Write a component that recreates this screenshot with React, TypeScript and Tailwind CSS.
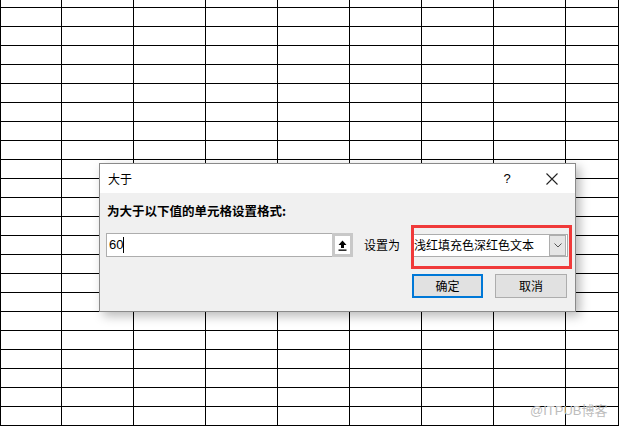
const COLS = [61, 72, 72, 72, 72, 72, 72, 72, 53];
const ROWS = [8, ...Array.from({ length: 22 }, () => 19)];

function Sheet() {
  return (
    <div className="flex flex-col w-[619px] h-[426px] overflow-hidden bg-white border-l border-black">
      {ROWS.map((h, r) => (
        <div key={r} className="flex shrink-0" style={{ height: h }}>
          {COLS.map((w, c) => (
            <div key={c} className="shrink-0 border-r border-b border-black" style={{ width: w }} />
          ))}
        </div>
      ))}
    </div>
  );
}

function Dialog() {
  return (
    <div className="absolute left-[99px] top-[163px] w-[477px] h-[149px] flex flex-col border border-[#8a8a8a] bg-[#f0f0f0] shadow-[4px_4px_10px_rgba(0,0,0,0.28)] font-['Noto_Sans_CJK_SC',sans-serif] text-[12px] text-black">
      {/* title bar */}
      <div className="h-[29px] shrink-0 bg-white flex items-center pl-[8px]">
        <span className="flex-1 leading-none">大于</span>
        <span className="w-[18px] text-center font-['Liberation_Sans',sans-serif] text-[13px] leading-none">?</span>
        <span className="w-[46px] flex justify-center ml-[13px]">
          <svg width="12" height="12" viewBox="0 0 12 12">
            <path d="M0.5 0.5 L11.5 11.5 M11.5 0.5 L0.5 11.5" stroke="#222" strokeWidth="1.1" fill="none" />
          </svg>
        </span>
      </div>
      {/* body */}
      <div className="flex-1 flex flex-col pl-[6px] pr-[7px]">
        <p className="mt-[11px] pl-[1px] font-bold text-[12.5px] leading-[14px]">为大于以下值的单元格设置格式:</p>
        <div className="mt-[15px] flex items-center">
          <div className="flex h-[24px] w-[247px] border border-[#adadad] bg-white">
            <div className="flex-1 flex items-center pl-[2px] font-['Liberation_Sans',sans-serif] text-[13px]">
              60<span className="w-px h-[16px] bg-black" />
            </div>
            <div className="w-[21px] -my-px -mr-px border-[3px] border-[#c8c8c8] bg-white flex items-center justify-center h-[24px]">
              <svg width="9" height="11" viewBox="0 0 9 11">
                <path d="M4.5 0.5 L8.5 5 H6 V8 H3 V5 H0.5 Z" fill="#000" />
                <rect x="0.5" y="9.5" width="8" height="1.3" fill="#000" />
              </svg>
            </div>
          </div>
          <span className="ml-[11px] w-[47px] leading-none">设置为</span>
          <div className="flex h-[23px] w-[157px] border border-[#adadad] bg-white items-center">
            <span className="flex-1 pl-[2px] leading-none">浅红填充色深红色文本</span>
            <div className="w-[17px] h-[21px] mr-px bg-[#e5e5e5] border border-[#adadad] flex items-center justify-center">
              <svg width="8" height="5" viewBox="0 0 8 5">
                <path d="M0.5 0.5 L4 4 L7.5 0.5" stroke="#555" strokeWidth="1" fill="none" />
              </svg>
            </div>
          </div>
        </div>
        <div className="mt-[17px] flex justify-end gap-[12px] pr-[1px]">
          <button className="w-[71px] h-[24px] bg-[#e1e1e1] border-2 border-[#0078d7] leading-none">确定</button>
          <button className="w-[72px] h-[24px] bg-[#e1e1e1] border border-[#adadad] leading-none">取消</button>
        </div>
      </div>
    </div>
  );
}

export default function App() {
  return (
    <div className="relative w-[619px] h-[426px] overflow-hidden bg-white">
      <Sheet />
      <Dialog />
      {/* red highlight box */}
      <div className="absolute left-[411px] top-[225px] w-[161px] h-[44px] border-[3px] border-[#f03a3a]" />
      <span className="absolute left-[530px] top-[403px] font-['Liberation_Sans','Noto_Sans_CJK_SC',sans-serif] text-[13px] leading-[16px] text-[#bdbdbd]">
        @ITPUB博客
      </span>
    </div>
  );
}
